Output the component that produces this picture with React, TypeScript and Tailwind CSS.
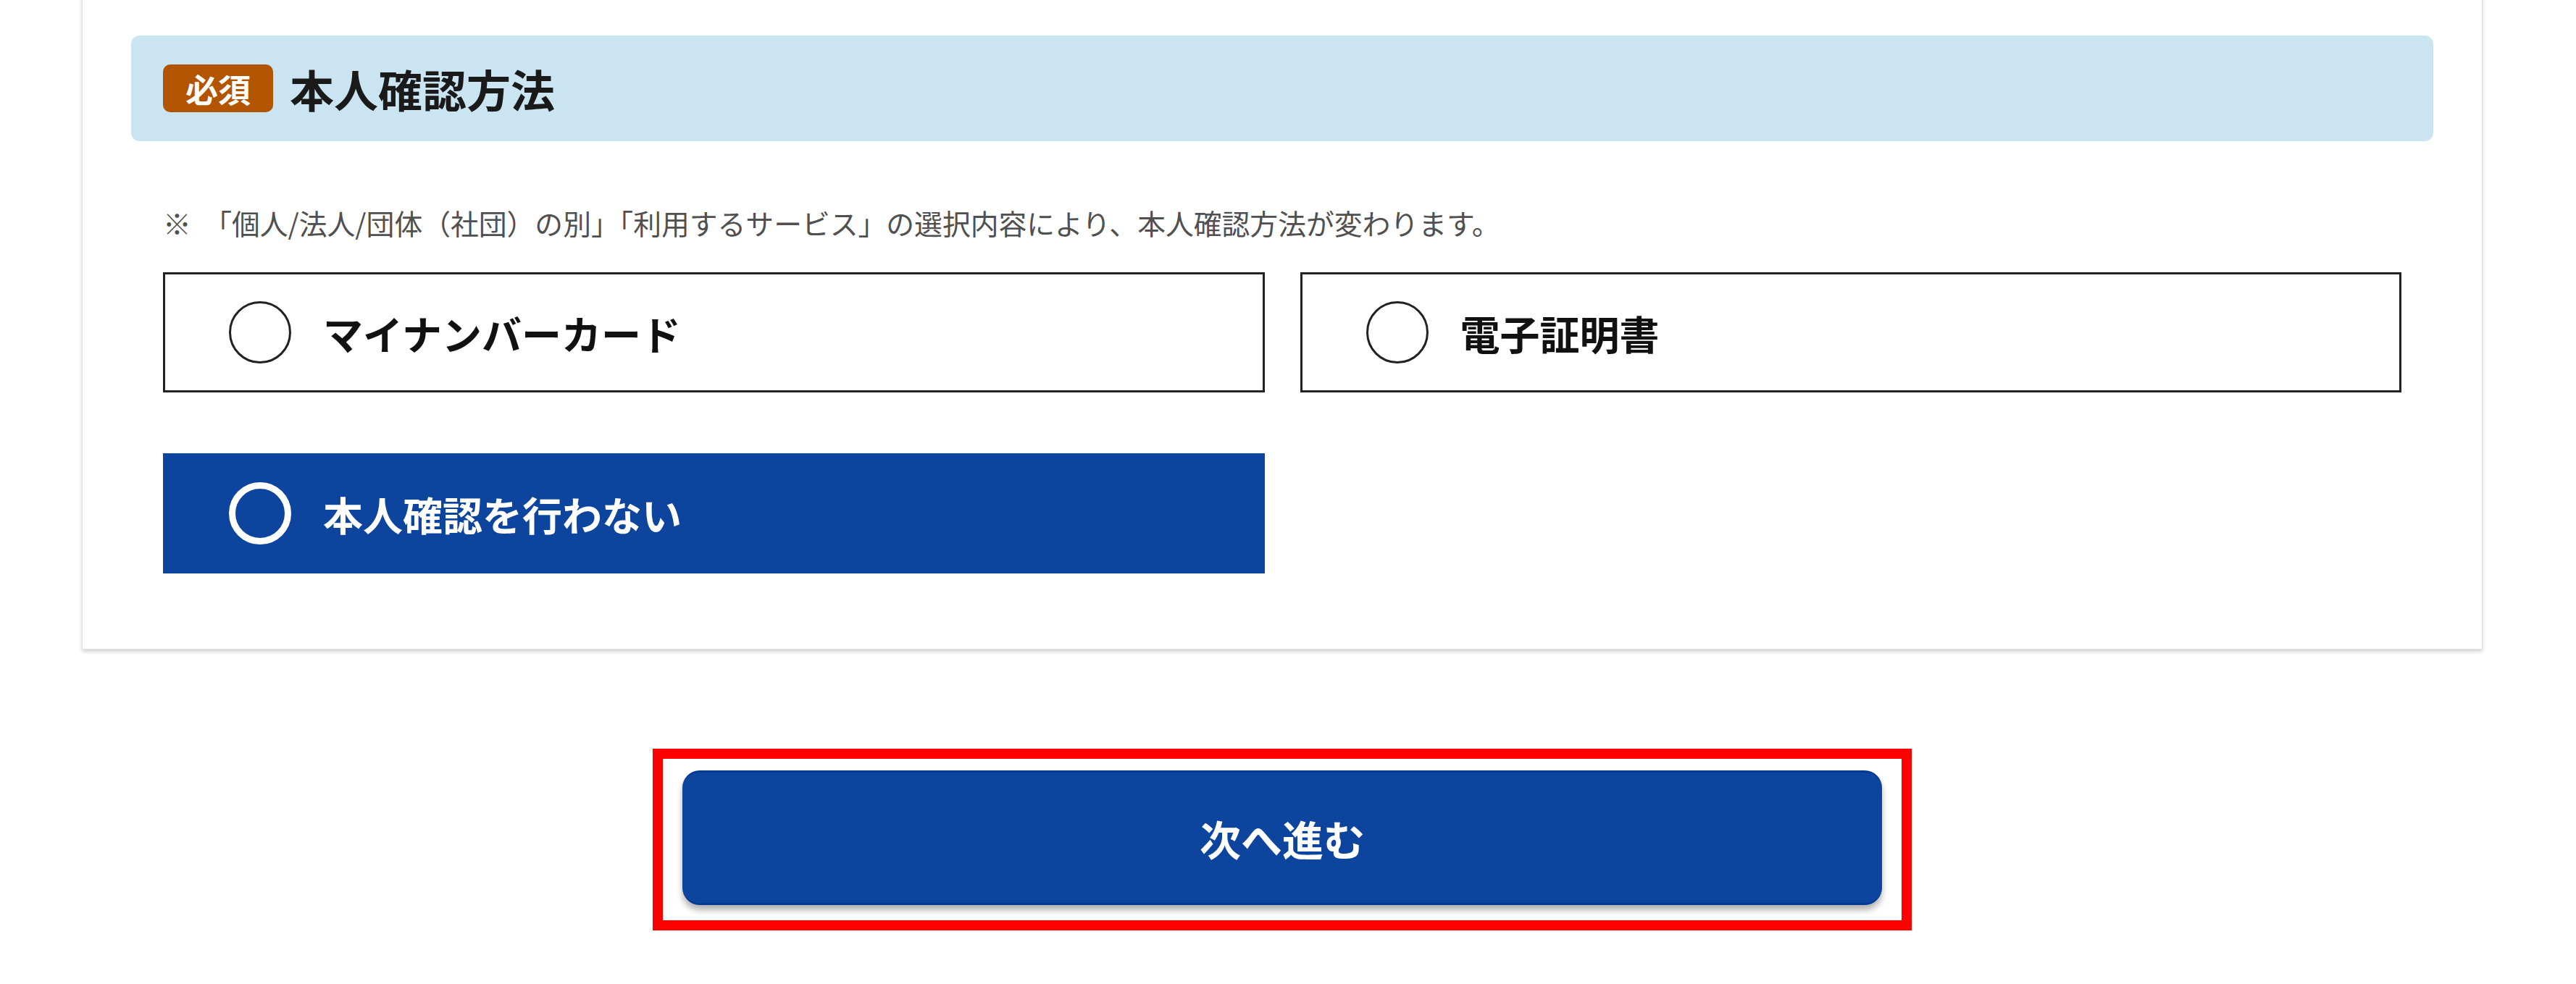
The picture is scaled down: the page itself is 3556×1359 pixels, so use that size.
import { useState } from 'react';

const FONT = "font-['Noto_Sans_CJK_JP','Noto_Sans',sans-serif]";

const options = [
  { id: 'mynumber', label: 'マイナンバーカード' },
  { id: 'cert', label: '電子証明書' },
  { id: 'none', label: '本人確認を行わない' },
];

function RadioOption({ label, selected, onClick }: { label: string; selected: boolean; onClick: () => void }) {
  return (
    <button
      type="button"
      onClick={onClick}
      className={
        selected
          ? 'flex h-[166px] items-center border-[3px] border-[#0d449e] bg-[#0d449e] pl-[88px] text-left'
          : 'flex h-[166px] items-center border-[3px] border-[#222222] bg-white pl-[88px] text-left'
      }
    >
      <span
        className={
          selected
            ? 'h-[86px] w-[86px] shrink-0 rounded-full border-[9px] border-white'
            : 'h-[86px] w-[86px] shrink-0 rounded-full border-[3px] border-[#222222]'
        }
      />
      <span
        className={
          selected
            ? `ml-[44px] text-[55px] font-bold leading-none text-white ${FONT}`
            : `ml-[44px] text-[55px] font-bold leading-none text-[#111111] ${FONT}`
        }
      >
        {label}
      </span>
    </button>
  );
}

export default function App() {
  const [selected, setSelected] = useState('none');

  return (
    <div className={`min-h-screen overflow-hidden bg-white pl-[113px] ${FONT}`}>
      <div className="w-[3314px]">
        {/* form card */}
        <div className="-mt-[10px] border border-[#e2e2e2] bg-white px-[67px] pt-[58px] pb-[104px] shadow-[0_3px_5px_rgba(0,0,0,0.18)]">
          <div className="flex h-[146px] items-center rounded-[12px] bg-[#cae4f1] pl-[44px]">
            <span className="flex h-[66px] items-center rounded-[10px] bg-[#b35400] px-[31px] text-[45px] font-bold leading-none text-white">
              必須
            </span>
            <h2 className="ml-[23px] text-[61px] font-bold leading-none text-[#1a1a1a]">本人確認方法</h2>
          </div>

          <div className="px-[44px]">
            <p className="mt-[84px] text-[38.8px] leading-[56px] text-[#505050]">
              ※&nbsp;&nbsp;「個人/法人/団体（社団）の別」「利用するサービス」の選択内容により、本人確認方法が変わります。
            </p>

            <div className="mt-[41px] grid grid-cols-2 gap-x-[49px] gap-y-[84px]">
              {options.map((o) => (
                <RadioOption
                  key={o.id}
                  label={o.label}
                  selected={selected === o.id}
                  onClick={() => setSelected(o.id)}
                />
              ))}
            </div>
          </div>
        </div>

        {/* next button, outlined in red */}
        <div className="mt-[137px] flex justify-center">
          <div className="border-[14px] border-[#ff0000] px-[27px] pt-[16px] pb-[21px]">
            <button
              type="button"
              className="flex h-[186px] w-[1656px] items-center justify-center rounded-[24px] border-y-[3px] border-[#003a94] bg-[#0d449e] text-[57px] font-bold leading-none text-white shadow-[0_7px_8px_rgba(0,0,0,0.3)]"
            >
              次へ進む
            </button>
          </div>
        </div>
      </div>
    </div>
  );
}
